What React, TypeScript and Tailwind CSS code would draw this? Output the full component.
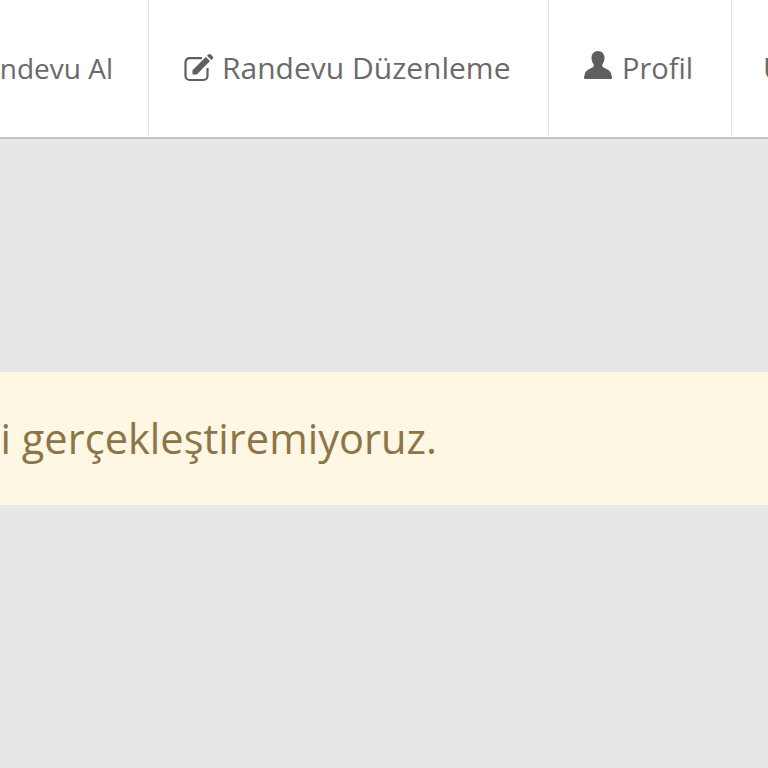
const font = { fontFamily: '"Open Sans", sans-serif' };

function EditIcon() {
  return (
    <svg viewBox="0 0 30 30" className="h-[30px] w-[30px] shrink-0">
      <path d="M18 5.200H5.500a4 4 0 0 0-4 4V23a4 4 0 0 0 4 4H19.500a4 4 0 0 0 4-4v-8" fill="none" stroke="#606060" strokeWidth="2.200" />
      <path d="M8.500 21.500V17.200L21.800 3.900 26 8.100 12.800 21.500z" fill="#606060" />
      <path d="M23 2.700l1.200-1.200c.8-.8 1.900-.8 2.700 0l1.700 1.700c.8.8.8 1.900 0 2.700l-1.300 1.200z" fill="#606060" />
    </svg>
  );
}

function UserIcon() {
  return (
    <svg viewBox="0 0 30 30" className="mb-[6px] h-[30px] w-[30px] shrink-0 fill-[#5e5e5e]">
      <path d="M15 1c-3.800 0-6.500 2.800-6.500 6.800 0 2.500.8 4.600 1.900 6.200.6.900.6 1.800.1 2.500-.6.800-1.600 1.200-2.700 1.700C4.400 19.700 2.300 21 1.700 24.500L1 27.600c-.1.700.4 1.400 1.100 1.400h25.800c.7 0 1.200-.7 1.100-1.400l-.7-3.100c-.6-3.500-2.700-4.800-6.100-6.300-1.100-.5-2.100-.9-2.700-1.700-.5-.7-.5-1.600.1-2.500 1.100-1.600 1.900-3.700 1.900-6.200C21.500 3.800 18.800 1 15 1z" />
    </svg>
  );
}

export default function App() {
  return (
    <div className="h-[768px] w-[768px] overflow-hidden bg-[#e7e7e7]" style={font}>
      <nav className="flex h-[139px] border-b-2 border-[#c4c4c4] bg-white pb-[2px] text-[#6a6a6a]">
        <div className="flex w-[149px] shrink-0 items-center justify-end overflow-hidden border-r border-[#e0e0e0] pr-[35px] text-[28px]">
          <span className="whitespace-nowrap">Randevu Al</span>
        </div>
        <div className="flex w-[400px] shrink-0 items-center gap-[8px] border-r border-[#e0e0e0] pl-[35px] text-[30px]">
          <EditIcon />
          <span className="whitespace-nowrap">Randevu Düzenleme</span>
        </div>
        <div className="flex w-[183px] shrink-0 items-center gap-[9px] border-r border-[#e0e0e0] pl-[34px] text-[29px]">
          <UserIcon />
          <span className="whitespace-nowrap">Profil</span>
        </div>
        <div className="flex flex-1 items-center pl-[31px] text-[30px]">
          <span className="whitespace-nowrap">U</span>
        </div>
      </nav>
      <div className="mt-[233px] flex h-[133px] items-center justify-end bg-[#fdf7e4] pr-[331px] text-[41.6px] text-[#8c7548]">
        <span className="whitespace-nowrap">Randevu işlemi gerçekleştiremiyoruz.</span>
      </div>
    </div>
  );
}
